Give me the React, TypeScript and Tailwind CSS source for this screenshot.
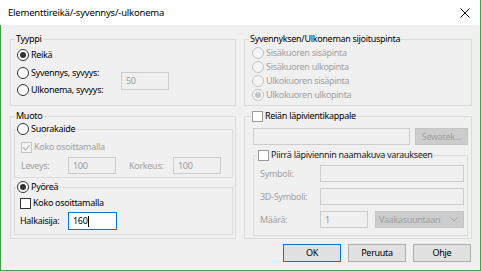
import React from "react";

function Radio({ checked, disabled }: { checked?: boolean; disabled?: boolean }) {
  return (
    <span
      className={
        disabled
          ? "w-[12px] h-[12px] rounded-full border border-[#c4c4c4] bg-[#f4f4f4] flex items-center justify-center shrink-0"
          : "w-[12px] h-[12px] rounded-full border border-[#333333] bg-white flex items-center justify-center shrink-0"
      }
    >
      {checked && (
        <span className={disabled ? "w-[6px] h-[6px] rounded-full bg-[#c4c4c4]" : "w-[6px] h-[6px] rounded-full bg-[#333333]"} />
      )}
    </span>
  );
}

function Check({ checked, disabled, light }: { checked?: boolean; disabled?: boolean; light?: boolean }) {
  return (
    <span
      className={
        disabled
          ? "w-[11px] h-[11px] border border-[#c4c4c4] bg-[#f4f4f4] flex items-center justify-center shrink-0"
          : light
          ? "w-[11px] h-[11px] border border-[#9a9a9a] bg-white flex items-center justify-center shrink-0"
          : "w-[11px] h-[11px] border border-[#333333] bg-white flex items-center justify-center shrink-0"
      }
    >
      {checked && (
        <svg width="9" height="9" viewBox="0 0 9 9">
          <polyline points="1,4.5 3.5,7 8,2" fill="none" stroke={disabled ? "#b0b0b0" : "#333"} strokeWidth="1.1" />
        </svg>
      )}
    </span>
  );
}

function Field({ value, w, active, caret }: { value?: string; w: string; active?: boolean; caret?: boolean }) {
  return (
    <div
      className={
        (active
          ? "border-[#0078d7] bg-white text-black "
          : "border-[#cccccc] bg-[#f0f0f0] text-[#9a9a9a] ") +
        w +
        " h-full border flex items-center pl-[4px] shrink-0"
      }
    >
      <span>{value}</span>
      {caret && <span className="w-[1px] h-[11px] bg-black" />}
    </div>
  );
}

function Legend({ children, left }: { children: React.ReactNode; left: string }) {
  return (
    <div className={"absolute -top-[9px] h-[16px] bg-[#f0f0f0] px-[1px] flex items-center gap-[2px] leading-[16px] whitespace-nowrap " + left}>
      {children}
    </div>
  );
}

export default function App() {
  return (
    <div className="w-[481px] h-[271px] flex flex-col font-['Noto_Sans',sans-serif] text-[9px] tracking-[-0.3px] leading-[16px] text-black border-r border-[#43a047] overflow-hidden whitespace-nowrap">
      {/* title bar */}
      <div className="h-[25px] bg-white flex items-center justify-between pl-[8px] pr-[10px] shrink-0">
        <span className="text-[9.5px] tracking-[-0.2px]">Elementtireikä/-syvennys/-ulkonema</span>
        <svg width="10" height="10" viewBox="0 0 10 10">
          <path d="M0.5 0.5 L9.5 9.5 M9.5 0.5 L0.5 9.5" stroke="#111" strokeWidth="1" />
        </svg>
      </div>

      {/* body */}
      <div className="flex-1 bg-[#f0f0f0] border-l border-b border-[#43a047] pl-[9px] pt-[14px] flex flex-col">
        <div className="grid grid-cols-[226px_228px] grid-rows-[67px_123px] gap-x-[8px] gap-y-[10px]">
          {/* Tyyppi */}
          <div className="relative border border-[#dcdcdc] pl-[6px] pt-[6px] flex flex-col">
            <Legend left="left-[4px]">Tyyppi</Legend>
            <div className="h-[17px] flex items-center gap-[2px]">
              <Radio checked />
              <span>Reikä</span>
            </div>
            <div className="flex items-center mt-[1px]">
              <div className="w-[104px] flex flex-col">
                <div className="h-[17px] flex items-center gap-[2px]">
                  <Radio />
                  <span>Syvennys, syvyys:</span>
                </div>
                <div className="h-[17px] flex items-center gap-[2px]">
                  <Radio />
                  <span>Ulkonema, syvyys:</span>
                </div>
              </div>
              <div className="h-[18px]">
                <Field value="50" w="w-[48px]" />
              </div>
            </div>
          </div>

          {/* Syvennyksen/Ulkoneman sijoituspinta */}
          <div className="relative border border-[#dcdcdc] pl-[7px] pt-[6px] flex flex-col text-[#a0a0a0]">
            <Legend left="left-[4px]">
              <span className="text-black">Syvennyksen/Ulkoneman sijoituspinta</span>
            </Legend>
            {["Sisäkuoren sisäpinta", "Sisäkuoren ulkopinta", "Ulkokuoren sisäpinta", "Ulkokuoren ulkopinta"].map((t, i) => (
              <div key={t} className="h-[14px] flex items-center gap-[2px]">
                <Radio disabled checked={i === 3} />
                <span>{t}</span>
              </div>
            ))}
          </div>

          {/* Muoto */}
          <div className="relative border border-[#dcdcdc] pl-[3px] pr-[2px] pt-[12px] flex flex-col">
            <Legend left="left-[4px]">Muoto</Legend>
            <div className="relative border border-[#dcdcdc] h-[49px] pl-[6px] pt-[9px] flex flex-col">
              <Legend left="left-[1px]">
                <Radio />
                <span>Suorakaide</span>
              </Legend>
              <div className="h-[16px] flex items-center gap-[2px] text-[#a0a0a0]">
                <Check checked disabled />
                <span>Koko osoittamalla</span>
              </div>
              <div className="h-[17px] mt-[2px] flex items-center text-[#a0a0a0]">
                <span className="w-[47px]">Leveys:</span>
                <Field value="100" w="w-[48px]" />
                <span className="w-[57px] pl-[13px]">Korkeus:</span>
                <Field value="100" w="w-[48px]" />
              </div>
            </div>
            <div className="relative border border-[#dcdcdc] h-[48px] mt-[9px] pl-[5px] pt-[7px] flex flex-col">
              <Legend left="left-[1px]">
                <Radio checked />
                <span>Pyöreä</span>
              </Legend>
              <div className="h-[16px] flex items-center gap-[2px]">
                <Check />
                <span>Koko osoittamalla</span>
              </div>
              <div className="h-[18px] mt-[1px] flex items-center">
                <span className="w-[48px]">Halkaisija:</span>
                <Field value="160" w="w-[49px]" active caret />
              </div>
            </div>
          </div>

          {/* Reiän läpivientikappale */}
          <div className="relative border border-[#dcdcdc] pl-[8px] pr-[3px] pt-[11px] flex flex-col">
            <Legend left="left-[6px]">
              <Check light />
              <span>Reiän läpivientikappale</span>
            </Legend>
            <div className="h-[17px] flex items-center justify-between">
              <Field w="w-[157px]" />
              <div className="w-[53px] h-full bg-[#cccccc] border border-[#c4c4c4] text-[#a0a0a0] flex items-center justify-center">
                Sewatek...
              </div>
            </div>
            <div className="relative border border-[#dcdcdc] h-[81px] mt-[10px] pl-[6px] pr-[3px] pt-[9px] flex flex-col gap-[6px] text-[#a0a0a0]">
              <Legend left="left-[3px]">
                <Check light />
                <span className="text-[#222]">Piirrä läpiviennin naamakuva varaukseen</span>
              </Legend>
              <div className="h-[17px] flex items-center">
                <span className="w-[60px]">Symboli:</span>
                <Field w="w-[144px]" />
              </div>
              <div className="h-[17px] flex items-center">
                <span className="w-[60px]">3D-Symboli:</span>
                <Field w="w-[144px]" />
              </div>
              <div className="h-[17px] flex items-center">
                <span className="w-[60px]">Määrä:</span>
                <Field value="1" w="w-[48px]" />
                <div className="ml-[7px] w-[89px] h-full bg-[#cccccc] border border-[#c4c4c4] flex items-center justify-between pl-[3px] pr-[5px] text-[#a0a0a0]">
                  <span>Vaakasuuntaan</span>
                  <svg width="8" height="5" viewBox="0 0 8 5">
                    <polyline points="0.5,0.5 4,4 7.5,0.5" fill="none" stroke="#a8a8a8" strokeWidth="1" />
                  </svg>
                </div>
              </div>
            </div>
          </div>
        </div>

        {/* buttons */}
        <div className="mt-[5px] flex justify-end gap-[7px] pr-[9px]">
          <button className="w-[58px] h-[18px] bg-[#e1e1e1] border border-[#0078d7] flex items-center justify-center">OK</button>
          <button className="w-[58px] h-[18px] bg-[#e1e1e1] border border-[#adadad] flex items-center justify-center">Peruuta</button>
          <button className="w-[58px] h-[18px] bg-[#e1e1e1] border border-[#adadad] flex items-center justify-center">Ohje</button>
        </div>
      </div>
    </div>
  );
}
